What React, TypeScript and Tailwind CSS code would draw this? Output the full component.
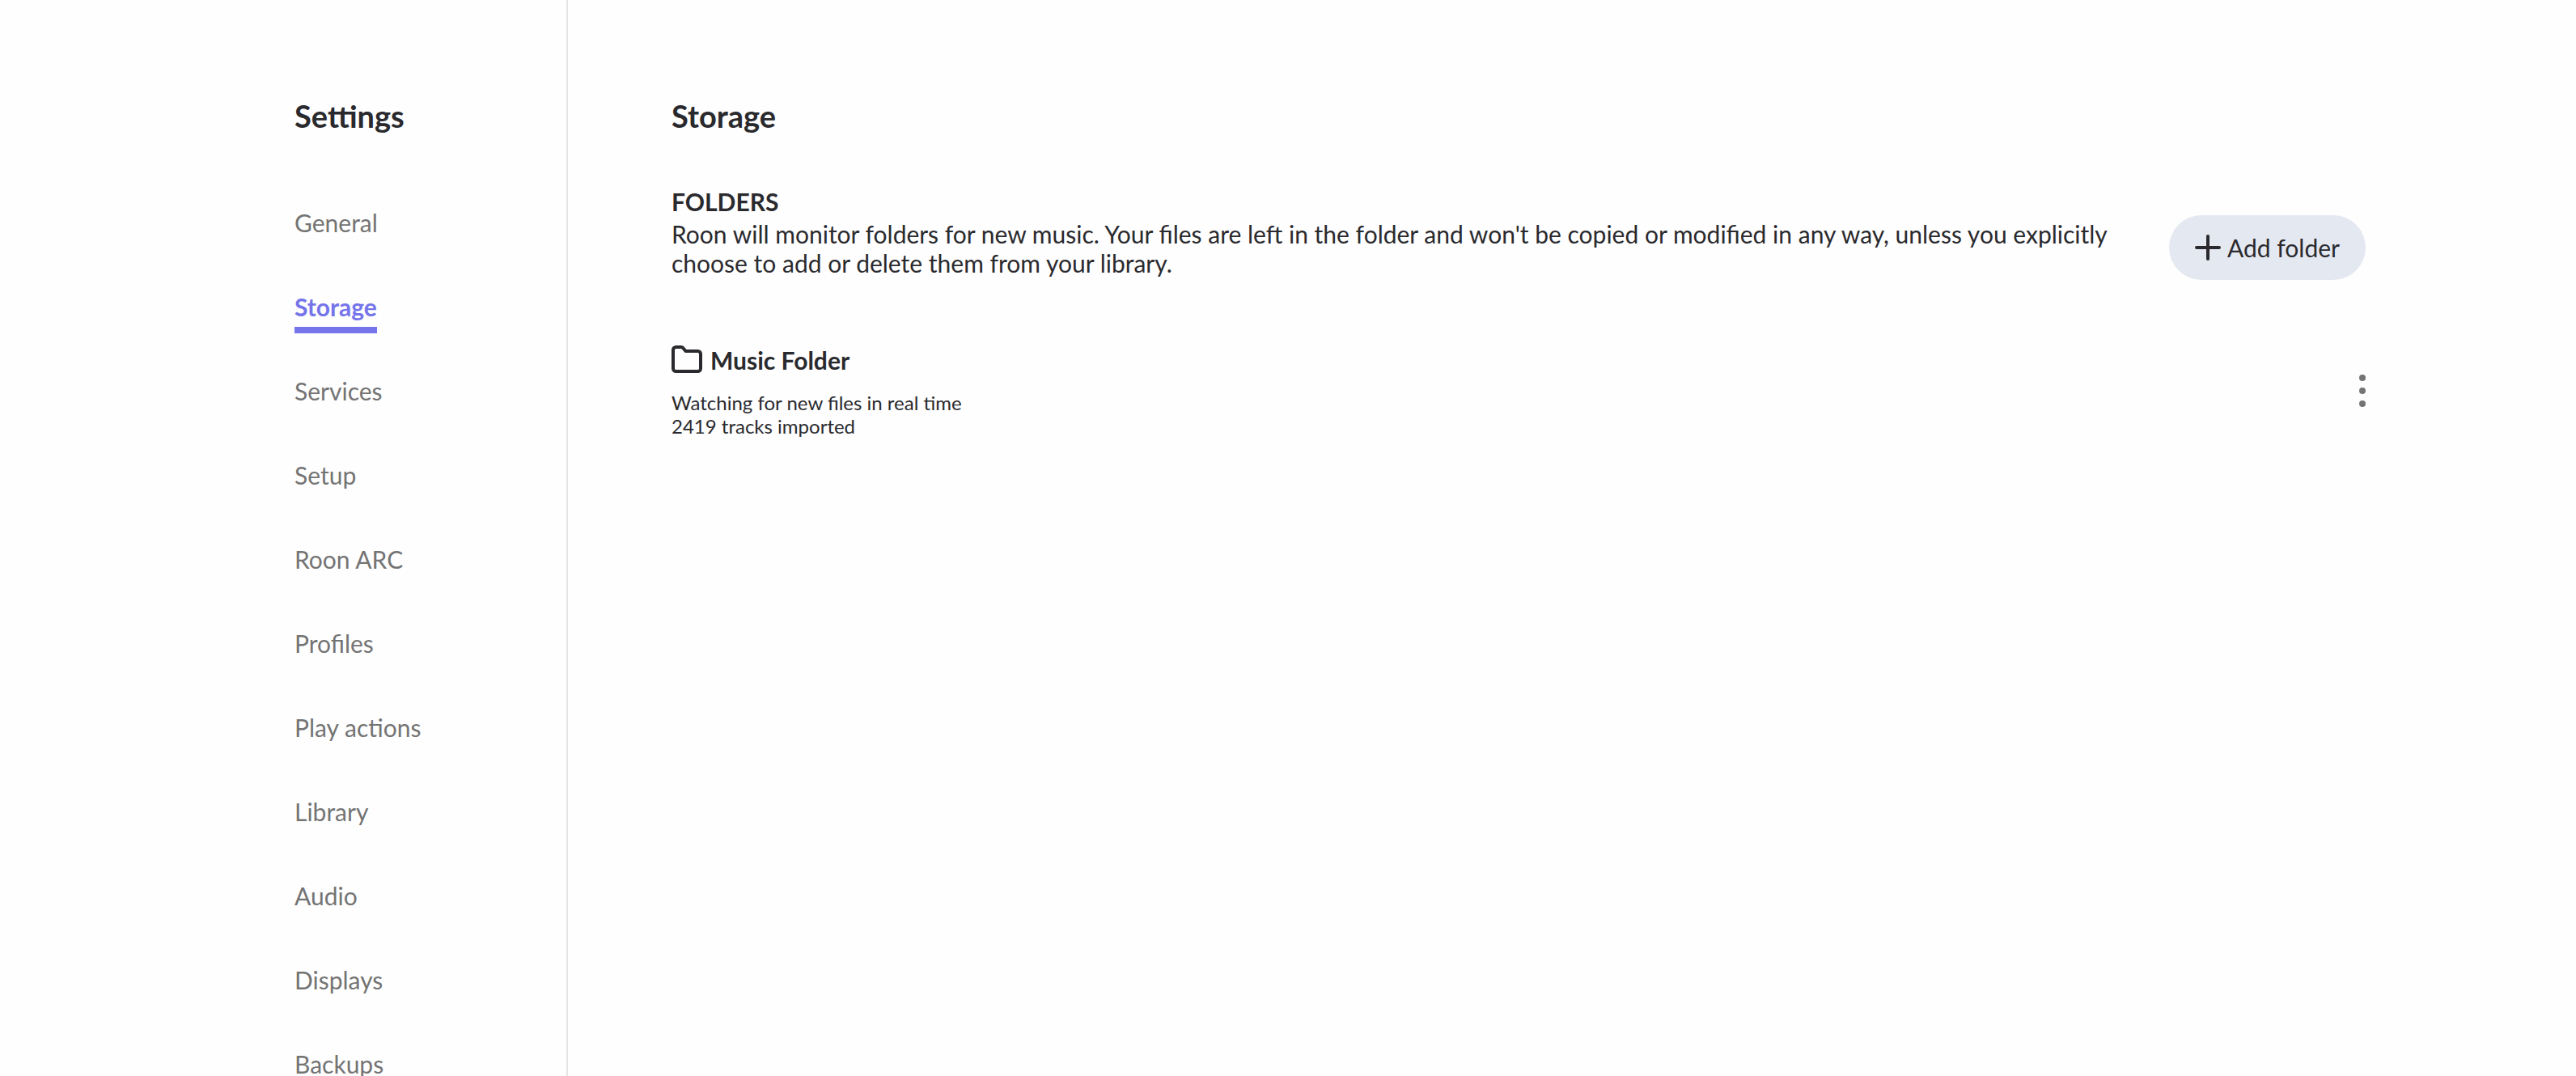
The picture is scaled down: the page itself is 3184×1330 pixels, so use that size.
const items = [
  "General",
  "Storage",
  "Services",
  "Setup",
  "Roon ARC",
  "Profiles",
  "Play actions",
  "Library",
  "Audio",
  "Displays",
  "Backups",
]

function Sidebar() {
  return (
    <aside className="w-[702px] shrink-0 border-r-2 border-[#e4e4e4] pt-[119px] pl-[364px]">
      <h1 className="text-[38px] leading-[48px] font-bold">Settings</h1>
      <nav className="mt-[77px] flex flex-col items-start gap-10">
        {items.map((item) => (
          <a
            key={item}
            href="#"
            aria-current={item === "Storage" ? "page" : undefined}
            className={
              item === "Storage"
                ? "h-16 border-b-8 border-[#7574ea] pt-[11px] text-[30px] leading-10 font-bold text-[#7574ea]"
                : "h-16 pt-[11px] text-[30px] leading-10 text-[#747474]"
            }
          >
            {item}
          </a>
        ))}
      </nav>
    </aside>
  )
}

function FolderRow() {
  return (
    <section className="mt-[42px] flex items-center justify-between">
      <div>
        <h3 className="flex items-center gap-[10px] text-[30px] leading-10 font-bold">
          <svg viewBox="0 0 38 36" fill="none" stroke="currentColor" strokeWidth="4" strokeLinejoin="round" className="h-9 w-[38px]">
            <path d="M2 5.5A3.5 3.5 0 0 1 5.500 2H12a3 3 0 0 1 2.400 1.200L17.500 7H32.500A3.500 3.500 0 0 1 36 10.500V28.500A3.500 3.500 0 0 1 32.500 32H5.500A3.500 3.500 0 0 1 2 28.500Z" />
          </svg>
          Music Folder
        </h3>
        <p className="mt-[18px] text-[24px] leading-[29px]">Watching for new files in real time</p>
        <p className="text-[24px] leading-[29px]">2419 tracks imported</p>
      </div>
      <button type="button" aria-label="Folder options" className="text-[#747474]">
        <svg viewBox="0 0 8 40" fill="currentColor" className="h-10 w-2">
          <circle cx="4" cy="4" r="4" />
          <circle cx="4" cy="20" r="4" />
          <circle cx="4" cy="36" r="4" />
        </svg>
      </button>
    </section>
  )
}

export default function App() {
  return (
    <div className="flex min-h-screen bg-[#fefefe] font-['Lato','Liberation_Sans',sans-serif] text-[#2a2a2e] antialiased">
      <Sidebar />
      <main className="min-w-0 flex-1 pt-[119px] pr-[260px] pl-32">
        <h2 className="text-[38px] leading-[48px] font-bold">Storage</h2>
        <section className="mt-[62px] flex items-center justify-between gap-16">
          <div className="pb-10">
            <h3 className="text-[30px] leading-10 font-bold">FOLDERS</h3>
            <p className="mt-0.5 text-[30px] leading-9">
              Roon will monitor folders for new music. Your files are left in the folder and won't be copied or modified in
              any way, unless you explicitly choose to add or delete them from your library.
            </p>
          </div>
          <button type="button" className="flex h-20 shrink-0 items-center gap-2 rounded-full bg-[#e4e8f1] px-8 text-[30px]">
            <svg viewBox="0 0 32 32" fill="none" stroke="currentColor" strokeWidth="4" strokeLinecap="round" className="size-8">
              <path d="M16 2v28M2 16h28" />
            </svg>
            Add folder
          </button>
        </section>
        <FolderRow />
      </main>
    </div>
  )
}
